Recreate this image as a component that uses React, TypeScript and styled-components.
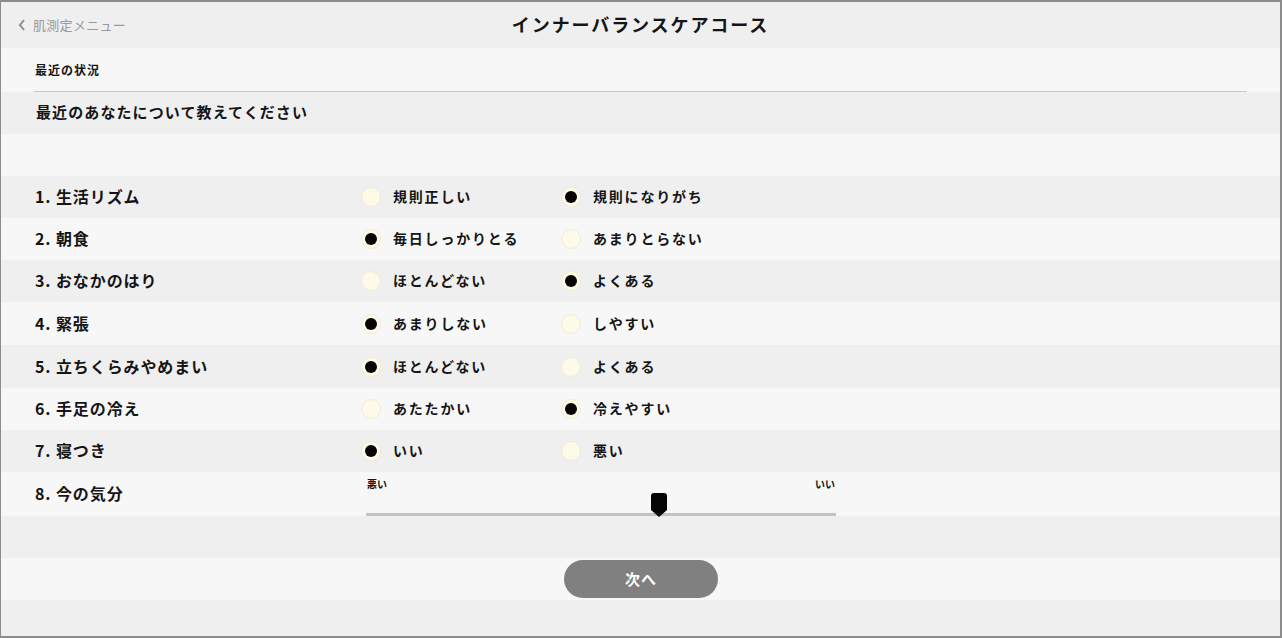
import React from "react";
import styled, { createGlobalStyle } from "styled-components";

const Global = createGlobalStyle`
    html, body {
        margin: 0;
        padding: 0;
        background: #efefef;
    }
    body {
        font-family: "Noto Sans CJK JP", "Noto Sans", sans-serif;
        color: #151515;
    }
`

const Frame = styled.div`
    width: 1282px;
    height: 638px;
    box-sizing: border-box;
    border-style: solid;
    border-color: #8c8c8c;
    border-width: 2px 2px 2px 1px;
    display: flex;
    flex-direction: column;
    overflow: hidden;
`

type BandProps = {
    $h: number
    $light?: boolean
}

const Band = styled.div<BandProps>`
    height: ${(p) => p.$h}px;
    flex: none;
    background: ${(p) => (p.$light ? "#f7f7f7" : "#efefef")};
    box-sizing: border-box;
`

const Header = styled(Band)`
    position: relative;
    display: flex;
    align-items: center;
    justify-content: center;
`

const Back = styled.div`
    position: absolute;
    left: 17px;
    top: 13px;
    display: flex;
    align-items: center;
    gap: 8px;
    font-size: 13px;
    color: #9a9a9a;
    letter-spacing: 0.3px;
`

const Title = styled.h1`
    margin: 0 0 3px 0;
    font-size: 18px;
    font-weight: 700;
    letter-spacing: 1.9px;
`

const Section = styled(Band)`
    padding: 0 33px 0 33px;
    display: flex;
`

const SectionInner = styled.div`
    flex: 1;
    border-bottom: 1px solid #c9c9c9;
    display: flex;
    align-items: center;
    font-size: 12px;
    font-weight: 700;
    letter-spacing: 1px;
    padding-left: 1px;
    padding-bottom: 1px;
`

const Intro = styled(Band)`
    display: flex;
    align-items: center;
    padding-left: 35px;
    padding-bottom: 4px;
    font-size: 15px;
    font-weight: 700;
    letter-spacing: 1.1px;
`

const QRow = styled(Band)`
    display: grid;
    grid-template-columns: 326px 200px 200px;
    align-items: center;
    padding-left: 34px;
    padding-bottom: 2px;
`

const Label = styled.div`
    font-size: 16px;
    font-weight: 700;
    letter-spacing: 0.9px;
`

const Option = styled.div`
    display: flex;
    align-items: center;
    gap: 12px;
    font-size: 14px;
    font-weight: 700;
    letter-spacing: 1.8px;
`

const Radio = styled.span<{ $on: boolean }>`
    width: 20px;
    height: 20px;
    flex: none;
    box-sizing: border-box;
    border-radius: 50%;
    background: #fdfbe7;
    border: 1px solid #efebd6;
    display: flex;
    align-items: center;
    justify-content: center;
    margin-top: 2px;

    &::after {
        content: "";
        width: 12px;
        height: 12px;
        border-radius: 50%;
        background: #050505;
        display: ${(p) => (p.$on ? "block" : "none")};
    }
`

const SliderRow = styled(Band)`
    display: grid;
    grid-template-columns: 331px 470px;
    padding-left: 34px;
`

const SliderLabel = styled(Label)`
    padding-top: 9px;
`

const Slider = styled.div`
    position: relative;
    padding-top: 4px;
`

const Ends = styled.div`
    display: flex;
    justify-content: space-between;
    font-size: 10px;
    font-weight: 700;
    padding: 0 1px;
`

const Track = styled.div`
    position: absolute;
    left: 0;
    right: 0;
    top: 41px;
    height: 3px;
    background: #c2c2c2;
`

const Thumb = styled.svg`
    position: absolute;
    top: 21px;
    left: 285px;
`

const ButtonRow = styled(Band)`
    display: flex;
    justify-content: center;
    align-items: center;
    padding-left: 1px;
`

const NextButton = styled.button`
    width: 154px;
    height: 38px;
    border: none;
    border-radius: 19px;
    background: #808080;
    color: #fff;
    font-family: inherit;
    font-size: 15px;
    font-weight: 700;
    letter-spacing: 1px;
    padding-bottom: 3px;
    cursor: pointer;
`

type Q = {
    label: string
    a: string
    b: string
    pick: 0 | 1
    h: number
}

const questions: Q[] = [
    { label: "1. 生活リズム", a: "規則正しい", b: "規則になりがち", pick: 1, h: 42 },
    { label: "2. 朝食", a: "毎日しっかりとる", b: "あまりとらない", pick: 0, h: 42 },
    { label: "3. おなかのはり", a: "ほとんどない", b: "よくある", pick: 1, h: 42 },
    { label: "4. 緊張", a: "あまりしない", b: "しやすい", pick: 0, h: 43 },
    { label: "5. 立ちくらみやめまい", a: "ほとんどない", b: "よくある", pick: 0, h: 43 },
    { label: "6. 手足の冷え", a: "あたたかい", b: "冷えやすい", pick: 1, h: 42 },
    { label: "7. 寝つき", a: "いい", b: "悪い", pick: 0, h: 42 },
]

export default function App() {
    return (
        <Frame>
            <Global />
            <Header $h={46}>
                <Back>
                    <svg width="7" height="12" viewBox="0 0 7 12">
                        <path d="M6 1 L2 6 L6 11" fill="none" stroke="#8d8d8d" strokeWidth="2" />
                    </svg>
                    肌測定メニュー
                </Back>
                <Title>インナーバランスケアコース</Title>
            </Header>
            <Section $h={44} $light>
                <SectionInner>最近の状況</SectionInner>
            </Section>
            <Intro $h={42}>最近のあなたについて教えてください</Intro>
            <Band $h={42} $light />
            {questions.map((q, i) => (
                <QRow key={q.label} $h={q.h} $light={i % 2 === 1}>
                    <Label>{q.label}</Label>
                    <Option>
                        <Radio $on={q.pick === 0} />
                        {q.a}
                    </Option>
                    <Option>
                        <Radio $on={q.pick === 1} />
                        {q.b}
                    </Option>
                </QRow>
            ))}
            <SliderRow $h={44} $light>
                <SliderLabel>8. 今の気分</SliderLabel>
                <Slider>
                    <Ends>
                        <span>悪い</span>
                        <span>いい</span>
                    </Ends>
                    <Track />
                    <Thumb width="16" height="25" viewBox="0 0 16 25">
                        <path d="M3 0 H13 Q16 0 16 3 V17 L8 24 L0 17 V3 Q0 0 3 0 Z" fill="#050505" />
                    </Thumb>
                </Slider>
            </SliderRow>
            <Band $h={42} />
            <ButtonRow $h={42} $light>
                <NextButton>次へ</NextButton>
            </ButtonRow>
            <Band $h={36} style={{ flex: 1 }} />
        </Frame>
    )
}
